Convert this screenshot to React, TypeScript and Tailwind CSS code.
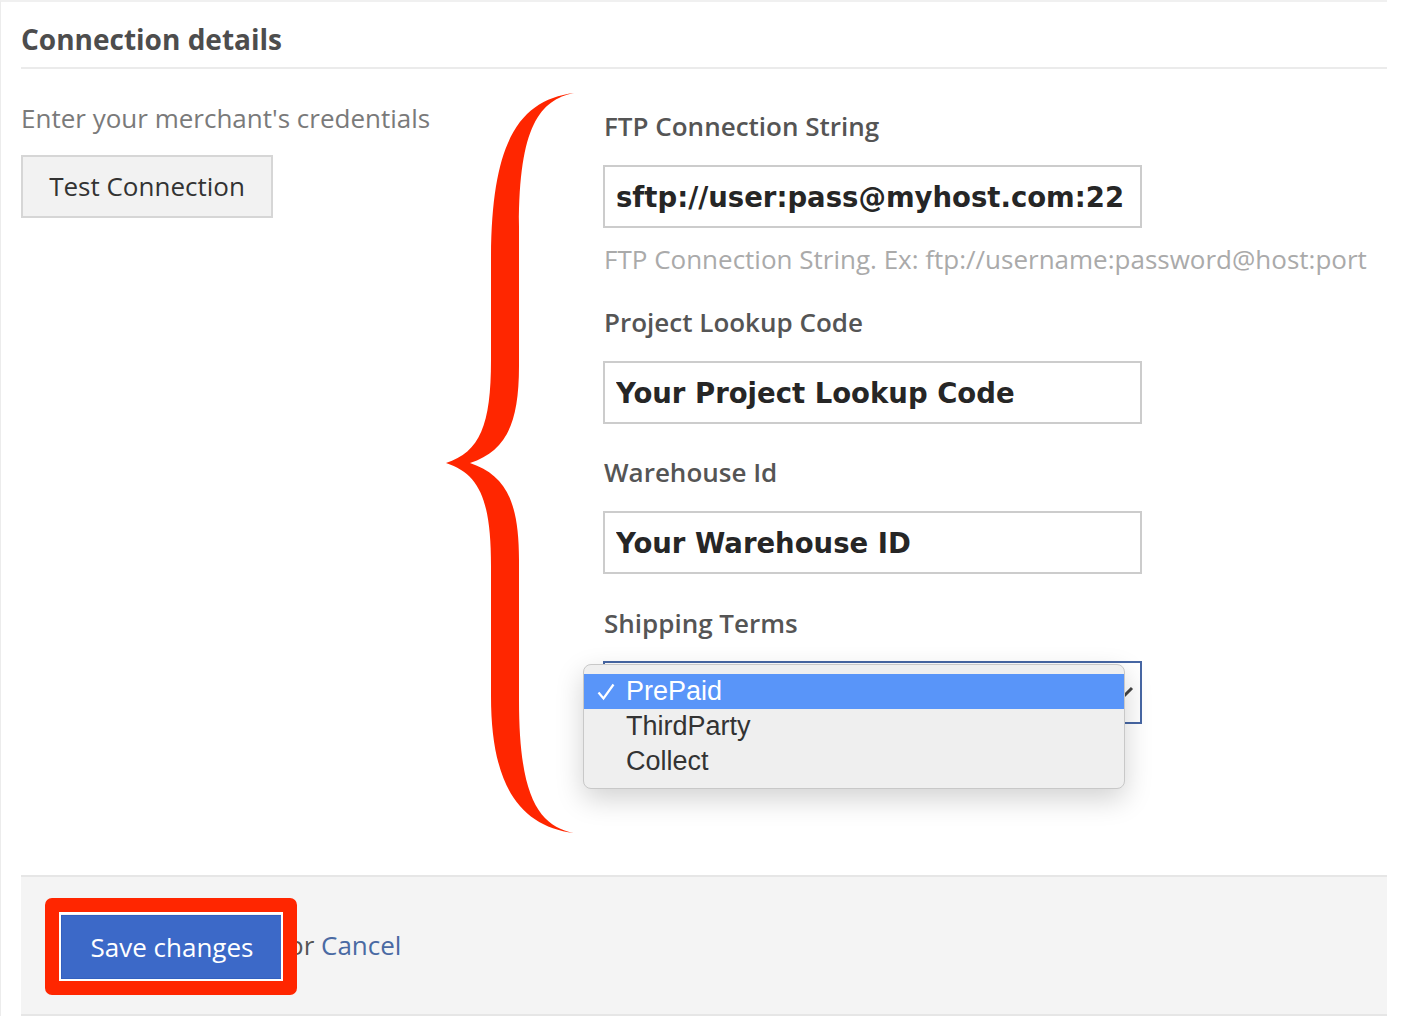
import React from 'react';

const fields = [
  { label: 'FTP Connection String', value: 'sftp://user:pass@myhost.com:22' },
  { label: 'Project Lookup Code', value: 'Your Project Lookup Code' },
  { label: 'Warehouse Id', value: 'Your Warehouse ID' },
];

function Brace() {
  // red curly brace annotation
  return (
    <svg
      className="absolute left-[440px] top-[85px] w-[140px] h-[755px]"
      viewBox="440 85 140 755"
    >
      <path
        fill="#ff2600"
        d="M574 93 C520 100 491 140 491 260 L491 360 C491 425 480 452 446 463 C480 474 491 501 491 566 L491 696 C491 786 520 826 574 833 C540 826 519 800 519 700 L519 560 C519 500 505 475 470 463 C505 451 519 426 519 366 L519 226 C519 126 540 100 574 93 Z"
      />
    </svg>
  );
}

export default function App() {
  return (
    <div className="relative w-[1428px] min-h-[1016px] bg-white font-['Open_Sans',sans-serif]">
      <div className="w-[1387px] border-l border-t-2 border-l-[#ececec] border-t-[#f0f0f0] pl-[20px]">
        {/* Header */}
        <div className="border-b-2 border-[#ebebeb] pt-[18px] pb-[9px]">
          <h2 className="text-[28px] leading-[38px] font-bold text-[#4d4d4d]">Connection details</h2>
        </div>

        {/* Body */}
        <div className="flex">
          <div className="w-[582px] pt-[31px]">
            <p className="text-[26px] leading-[36px] text-[#7a7a7a]">Enter your merchant's credentials</p>
            <button className="mt-[19px] h-[63px] w-[252px] border-2 border-[#d6d6d6] bg-[#f2f2f2] text-[26px] text-[#333] flex items-center justify-center">
              Test Connection
            </button>
          </div>

          <div className="flex-1 pt-[39px] pb-[151px]">
            {fields.map((f, i) => (
              <div key={f.label} className={i === 1 ? 'mt-[27px]' : i === 2 ? 'mt-[30px]' : ''}>
                <label className="block pl-[1px] text-[26px] leading-[36px] font-semibold text-[#555]">{f.label}</label>
                <input
                  readOnly
                  value={f.value}
                  className="mt-[21px] block h-[63px] w-[539px] border-2 border-[#cccccc] bg-white px-[11px] font-['DejaVu_Sans',sans-serif] font-bold text-[27.5px] text-[#262626] outline-none"
                />
                {i === 0 && (
                  <p className="mt-[13px] pl-[1px] text-[26px] leading-[36px] text-[#aaaaaa] whitespace-nowrap">
                    FTP Connection String. Ex: ftp://username:password@host:port
                  </p>
                )}
              </div>
            ))}

            <div className="mt-[31px]">
              <label className="block pl-[1px] text-[26px] leading-[36px] font-semibold text-[#555]">Shipping Terms</label>
              <div className="relative mt-[20px] h-[63px] w-[539px] border-2 border-[#4767a4] bg-white">
                <svg className="absolute right-[6px] top-[23px] w-[18px] h-[12px]" viewBox="0 0 18 12">
                  <polyline points="2,2 9,9 16,2" fill="none" stroke="#444" strokeWidth="3" />
                </svg>
                {/* open dropdown list */}
                <div className="absolute left-[-22px] top-[1px] w-[542px] rounded-[8px] border border-[#c8c8c8] bg-[#efefef] py-[9px] shadow-[0_10px_28px_rgba(0,0,0,0.18)] font-['Liberation_Sans',Arial,sans-serif] text-[27px]">
                  <div className="flex h-[35px] items-center bg-[#5995f9] text-white">
                    <span className="flex w-[42px] justify-center pl-[2px]">
                      <svg className="w-[18px] h-[18px]" viewBox="0 0 18 18">
                        <polyline points="1.5,9.5 6.5,15.5 16.5,1.5" fill="none" stroke="white" strokeWidth="2.2" />
                      </svg>
                    </span>
                    <span>PrePaid</span>
                  </div>
                  <div className="flex h-[35px] items-center pl-[42px] text-[#333]">ThirdParty</div>
                  <div className="flex h-[35px] items-center pl-[42px] text-[#333]">Collect</div>
                </div>
              </div>
            </div>
          </div>
        </div>

        {/* Footer */}
        <div className="flex h-[141px] items-start border-y-2 border-[#e6e6e6] bg-[#f4f4f4] pl-[40px] pt-[38px]">
          <button className="h-[64px] w-[222px] border border-[#3360bf] bg-[#3c69c8] text-[26px] text-white">
            Save changes
          </button>
          <span className="ml-[5px] mt-[12px] text-[26px] leading-[36px] text-[#555]">
            or <a className="text-[#4a6aa3]">Cancel</a>
          </span>
        </div>
      </div>

      <Brace />
      {/* red highlight around save button */}
      <div className="absolute left-[45px] top-[898px] h-[97px] w-[252px] rounded-[7px] border-[14px] border-[#ff2600] shadow-[inset_0_0_0_2px_white]" />
    </div>
  );
}
